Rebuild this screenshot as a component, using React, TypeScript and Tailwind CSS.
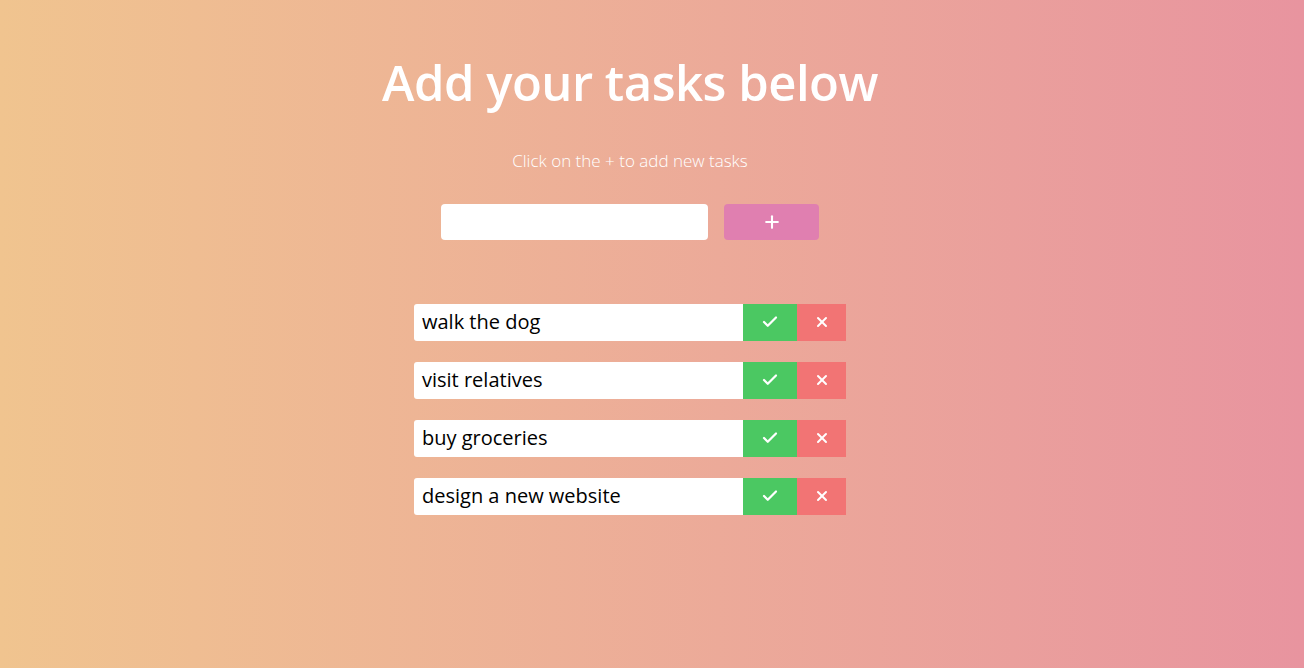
import { Check, X, Plus } from "lucide-react";

const tasks = ["walk the dog", "visit relatives", "buy groceries", "design a new website"];

export default function App() {
  return (
    <div className="min-h-[668px] w-full bg-gradient-to-r from-[#f0c48f] to-[#e8949f] font-['Open_Sans',sans-serif] flex flex-col items-center pr-[44px]">
      <h1 className="mt-[52px] text-[49px] leading-[60px] font-semibold text-white tracking-[-0.5px]">Add your tasks below</h1>
      <p className="mt-[36px] text-[17px] font-light text-white">Click on the + to add new tasks</p>

      <div className="mt-[30px] flex gap-4">
        <input className="w-[267px] h-9 rounded bg-white outline-none px-2" />
        <button className="w-[95px] h-9 rounded bg-[#e07fb0] flex items-center justify-center text-white">
          <Plus size={20} strokeWidth={2.5} />
        </button>
      </div>

      <div className="mt-[64px] flex flex-col gap-[21px]">
        {tasks.map(t => (
          <div key={t} className="flex h-[37px] w-[432px]">
            <div className="flex-1 bg-white rounded-l-[3px] flex items-center pl-2 text-[20px] text-black">{t}</div>
            <button className="w-[54px] bg-[#4bc862] flex items-center justify-center text-white">
              <Check size={18} strokeWidth={3} />
            </button>
            <button className="w-[49px] bg-[#f27474] flex items-center justify-center text-white">
              <X size={16} strokeWidth={3} />
            </button>
          </div>
        ))}
      </div>
    </div>
  );
}
